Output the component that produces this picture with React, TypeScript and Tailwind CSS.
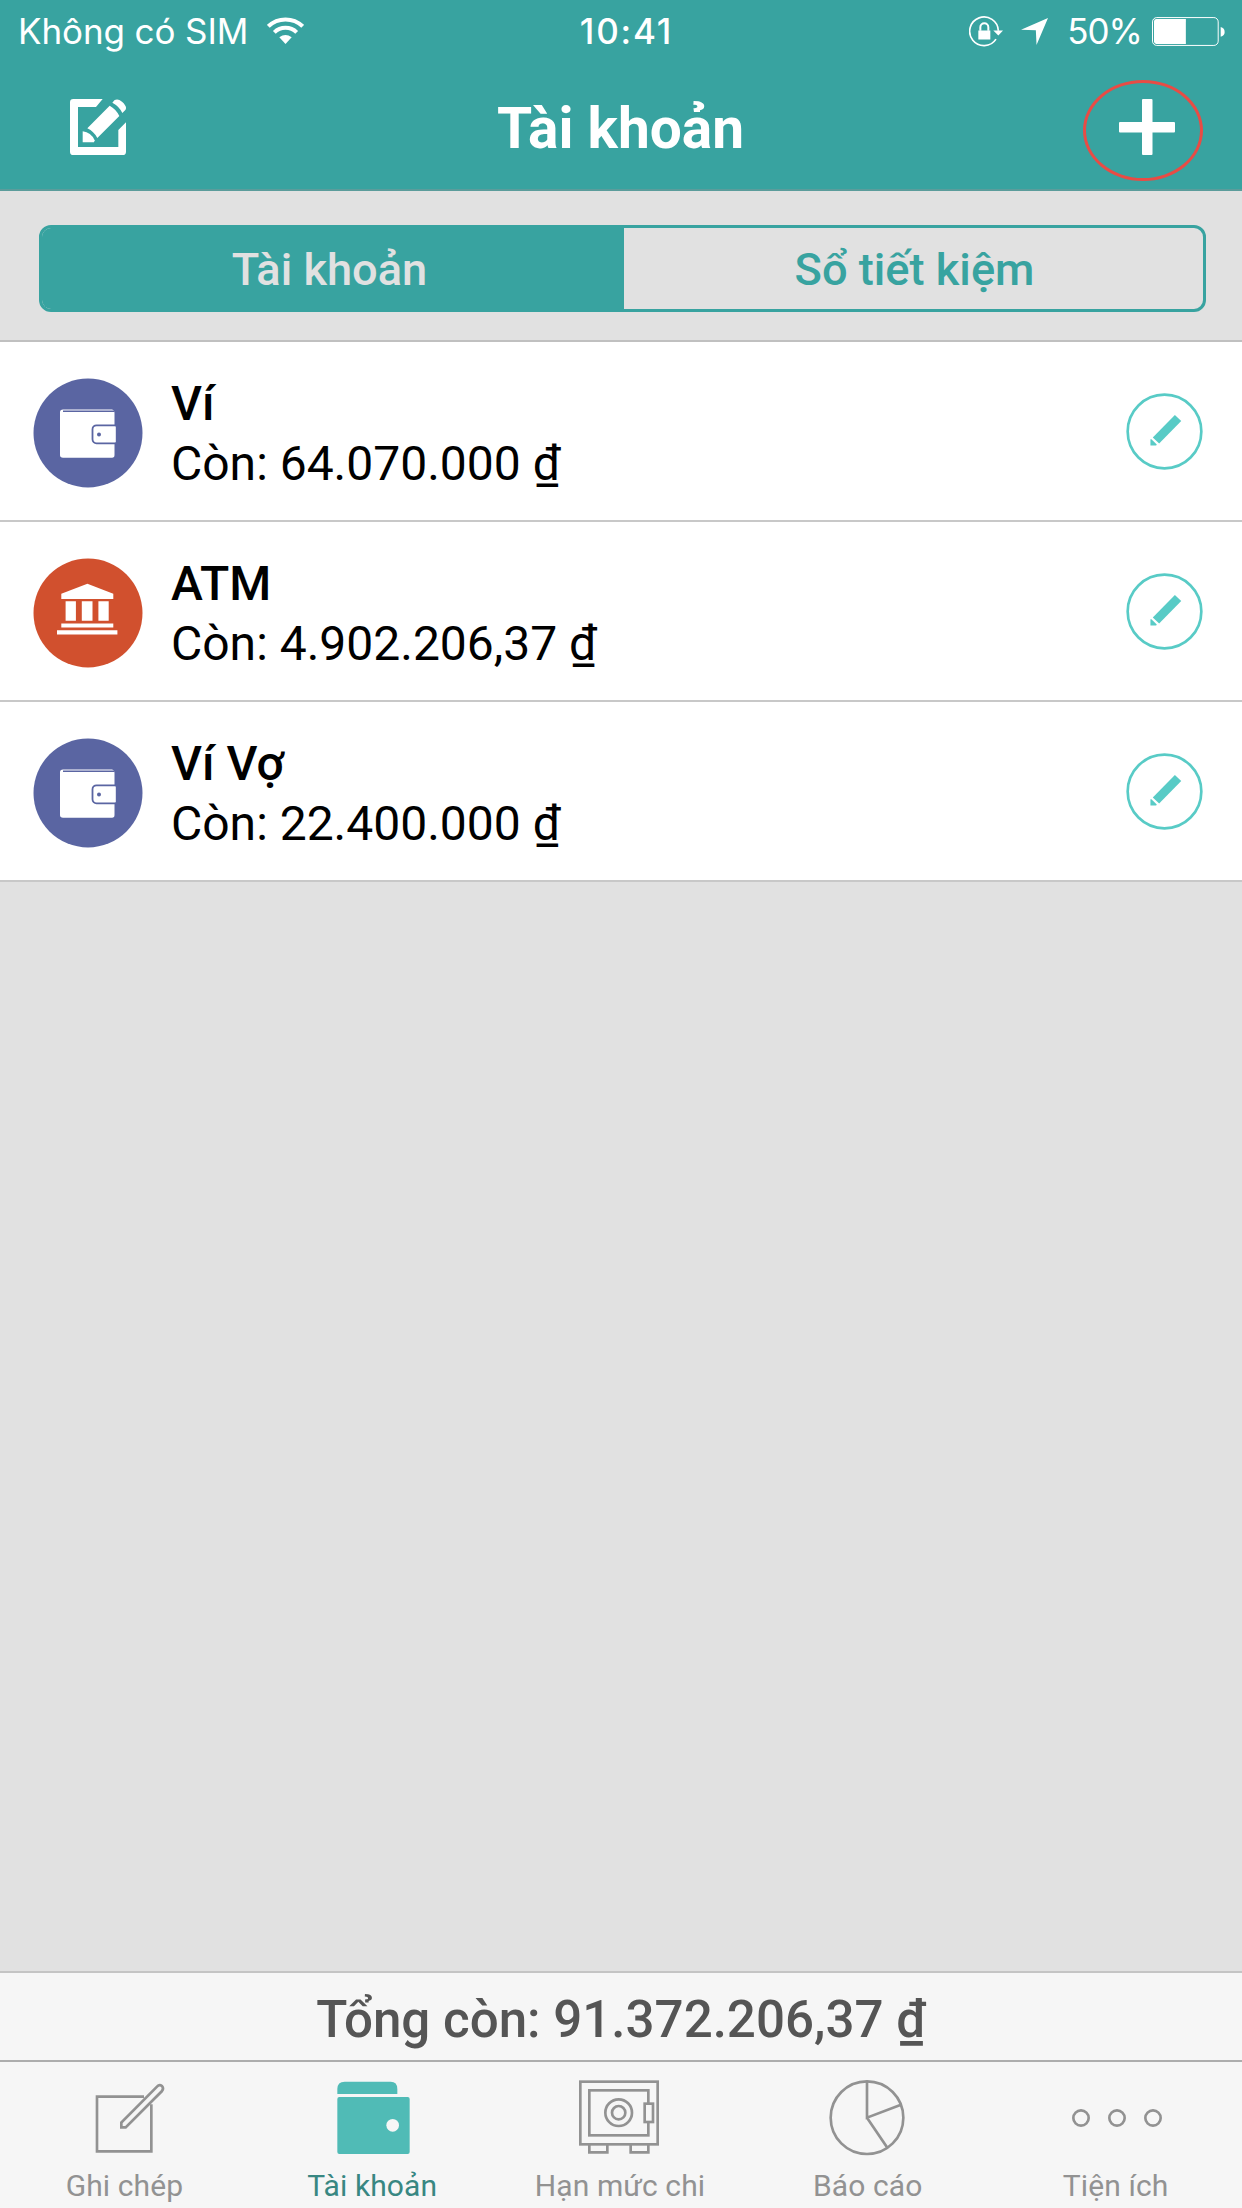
import React from "react";
import clsx from "clsx";

type Account = {
  name: string;
  balance: string;
  type: "wallet" | "bank";
};

const accounts: Account[] = [
  { name: "Ví", balance: "64.070.000", type: "wallet" },
  { name: "ATM", balance: "4.902.206,37", type: "bank" },
  { name: "Ví Vợ", balance: "22.400.000", type: "wallet" },
];

const tabs = [
  { label: "Ghi chép", icon: <NoteIcon /> },
  { label: "Tài khoản", icon: <WalletTabIcon />, active: true },
  { label: "Hạn mức chi", icon: <SafeIcon /> },
  { label: "Báo cáo", icon: <PieIcon /> },
  { label: "Tiện ích", icon: <MoreIcon /> },
];

function WifiIcon() {
  return (
    <svg viewBox="0 0 111 84" className="w-[37px] h-[28px]" fill="none" stroke="#fff" strokeWidth="12">
      <path d="M4 28 A74 74 0 0 1 107 28" />
      <path d="M22 46 A48 48 0 0 1 89 46" />
      <path d="M37 61 Q55.500 47 74 61 L55.500 81 Z" fill="#fff" stroke="none" />
    </svg>
  );
}

function RotationLockIcon() {
  return (
    <svg viewBox="0 0 102 92" className="w-[34px] h-[31px]" fill="none" stroke="#fff">
      <path d="M88 44 A43 43 0 1 0 81 69" strokeWidth="5" />
      <path d="M73 43 H102 L88 58 Z" fill="#fff" stroke="none" />
      <rect x="28" y="43" width="36" height="27" fill="#fff" stroke="none" />
      <path d="M34 44 V33 A12 12 0 0 1 58 33 V44" strokeWidth="6" />
    </svg>
  );
}

function LocationIcon() {
  return (
    <svg viewBox="0 0 80 80" className="w-[27px] h-[27px]" fill="#fff">
      <path d="M0 35 L80 0 L46 80 L44 36 Z" />
    </svg>
  );
}

function BatteryIcon() {
  return (
    <svg viewBox="0 0 220 87" className="w-[73px] h-[29px]" fill="#fff">
      <rect x="1.500" y="1.500" width="198" height="84" rx="13" fill="none" stroke="#fff" strokeWidth="3" />
      <path d="M13 6 H102 V81 H13 Q6 81 6 74 V13 Q6 6 13 6 Z" />
      <path d="M207 30 Q219 33 219 45 Q219 56 207 59 Z" />
    </svg>
  );
}

function ComposeIcon() {
  return (
    <svg viewBox="0 0 168 168" className="w-14 h-14" fill="#fff">
      <path d="M98 0 H10 Q0 0 0 10 V158 Q0 168 10 168 H158 Q168 168 168 158 V70 L145 93 V144 H24 V24 H78 Z" />
      <path d="M119 20 Q138 30 148 51 L82 117 Q72 98 52 88 Z" />
      <path d="M38 97 Q63 100 74 124 L72 130 H38 Z" />
      <path d="M127 11 L133 4 Q143 -3 156 8 Q173 23 166 33 L157 42 Q148 22 127 11 Z" />
    </svg>
  );
}

function WalletBadge() {
  return (
    <svg viewBox="0 0 110 110" className="w-[110px] h-[110px]">
      <circle cx="55" cy="55" r="54.500" fill="#5a65a2" />
      <path d="M30 31.500 H79 Q81.500 32 81.500 35 V77 Q81.500 79.700 79 79.700 H30 Q27 79.700 27 77 V34 Q27 31.500 30 31.500 Z" fill="#fff" />
      <path d="M30 33.300 H81.500" stroke="#5a65a2" strokeWidth="1.400" />
      <rect x="59.500" y="47.300" width="26" height="18" rx="4" fill="#fff" stroke="#5a65a2" strokeWidth="1.800" />
      <path d="M82.800 45 H88 V68 H82.800 Z" fill="#5a65a2" />
      <circle cx="66" cy="56.500" r="2" fill="#5a65a2" />
    </svg>
  );
}

function BankBadge() {
  return (
    <svg viewBox="0 0 110 110" className="w-[110px] h-[110px]">
      <circle cx="55" cy="55" r="54.500" fill="#d1502e" />
      <g fill="#fff">
        <path d="M54.400 25.700 L80.300 35.700 V41 H28.300 V35.700 Z" />
        <path d="M32.600 43.300 h10.300 v19.400 h-10.300 Z M48.800 43.300 h10.700 v19.400 h-10.700 Z M65.400 43.300 h10.300 v19.400 h-10.300 Z" />
        <path d="M28.300 65.500 h52 v4 h-52 Z M24 72.200 h60.400 v4.200 h-60.400 Z" />
      </g>
    </svg>
  );
}

function EditCircle() {
  return (
    <svg viewBox="0 0 230 230" className="w-[77px] h-[77px]" fill="#58cbc6">
      <circle cx="115" cy="115" r="110" fill="none" stroke="#58cbc6" strokeWidth="8" />
      <path d="M146 66 L165 84 L99 151 L80 133 Z" />
      <path d="M73 138 L76 138 L92 154 L90 157 H73 Z" />
    </svg>
  );
}

function NoteIcon() {
  return (
    <svg viewBox="0 0 252 234" className="w-[84px] h-[78px]" fill="none" stroke="#929292" strokeWidth="8">
      <path d="M186 53 H45 V217 H208 V76" />
      <path d="M118 145 V131 L225 23 Q232 15 240 21 Q246 28 240 36 L131 145 Z" />
    </svg>
  );
}

function WalletTabIcon() {
  return (
    <svg viewBox="0 0 252 234" className="w-[84px] h-[78px]" fill="#50bbb6">
      <path d="M22 45 V30 Q22 8 44 8 H182 Q202 8 202 30 V45 Z" />
      <rect x="22" y="54" width="217" height="171" rx="6" />
      <circle cx="188" cy="139" r="19" fill="#f6f6f6" />
    </svg>
  );
}

function SafeIcon() {
  return (
    <svg viewBox="0 0 252 234" className="w-[84px] h-[78px]" fill="none" stroke="#929292" strokeWidth="8">
      <rect x="10" y="8" width="232" height="188" />
      <rect x="37" y="34" width="177" height="135" />
      <circle cx="125" cy="101" r="40" />
      <circle cx="125" cy="101" r="20" />
      <rect x="203" y="74" width="25" height="55" fill="#f6f6f6" />
      <path d="M37 196 V220 H91 V196 M161 196 V220 H214 V196" />
    </svg>
  );
}

function PieIcon() {
  return (
    <svg viewBox="0 0 252 234" className="w-[84px] h-[78px]" fill="none" stroke="#929292" strokeWidth="8">
      <circle cx="126" cy="116" r="109" />
      <path d="M126 7 V116 L226 78 M126 116 L186 205" />
    </svg>
  );
}

function MoreIcon() {
  return (
    <svg viewBox="0 0 252 234" className="w-[84px] h-[78px] overflow-visible" fill="none" stroke="#929292" strokeWidth="8">
      <circle cx="24" cy="117" r="23" />
      <circle cx="132" cy="117" r="23" />
      <circle cx="240" cy="117" r="23" />
    </svg>
  );
}

function StatusBar() {
  return (
    <div className="grid grid-cols-3 items-center h-[62px] pl-[18px] pr-[17px] font-['Inter',sans-serif] text-[35px] leading-none">
      <div className="flex items-center gap-[19px] whitespace-nowrap">
        <span className="font-normal tracking-[-0.1px]">Không có SIM</span>
        <WifiIcon />
      </div>
      <p className="pl-[10px] text-center font-medium tracking-[1.8px]">10:41</p>
      <div className="flex items-center justify-end">
        <RotationLockIcon />
        <div className="ml-[18px]">
          <LocationIcon />
        </div>
        <span className="ml-[19px] mr-[10px] font-normal tracking-[-1px]">50%</span>
        <BatteryIcon />
      </div>
    </div>
  );
}

function AccountRow({ name, balance, type }: Account) {
  return (
    <li className="flex items-center h-[180px] pt-[2px] pl-[33px] pr-[39px] bg-white border-b-2 border-[#c8c8c8]">
      <div className="pt-[1px]">{type === "wallet" ? <WalletBadge /> : <BankBadge />}</div>
      <div className="ml-[28px] pt-[4px] flex-1 text-[48px] leading-[60px] text-black">
        <p className="font-medium">{name}</p>
        <p>Còn: {balance} ₫</p>
      </div>
      <button className="pb-[2px]">
        <EditCircle />
      </button>
    </li>
  );
}

export default function App() {
  return (
    <div className="flex flex-col w-[1242px] h-[2208px] overflow-hidden bg-[#e1e1e1] font-['Roboto',sans-serif]">
      <header className="h-[191px] bg-[#38a3a0] text-white border-b-2 border-[#5b9c9b]">
        <StatusBar />
        <div className="flex items-center justify-between h-[130px] pl-[70px] pr-[67px]">
          <button>
            <ComposeIcon />
          </button>
          <h1 className="pt-[4px] pr-[4px] text-[56.8px] leading-none font-bold">Tài khoản</h1>
          <button className="relative">
            <svg viewBox="0 0 56 56" className="w-14 h-14" fill="#fff">
              <rect x="0" y="23" width="56" height="10.500" rx="1" />
              <rect x="23" y="0" width="10.500" height="56" rx="1" />
            </svg>
            {/* highlight ring around the add button */}
            <span className="absolute left-[-36px] top-[-19px] w-[120px] h-[101px] rounded-[50%] border-3 border-[#e84c45]" />
          </button>
        </div>
      </header>

      <div className="h-[151px] pt-[34px] pl-[39px] pr-[36px] border-b-2 border-[#c0c0c0]">
        <div className="flex h-[87px] rounded-[12px] border-3 border-[#38a3a0] overflow-hidden text-[45.2px] leading-none font-medium">
          <button className="w-[582px] pt-[3px] pr-[7px] bg-[#38a3a0] text-[#e1e1e1]">Tài khoản</button>
          <button className="flex-1 pt-[3px] pl-[2px] text-[#38a3a0]">Sổ tiết kiệm</button>
        </div>
      </div>

      <ul>
        {accounts.map((account) => (
          <AccountRow key={account.name} {...account} />
        ))}
      </ul>

      <div className="mt-auto flex items-center justify-center h-[89px] pt-[6px] bg-[#f6f6f6] border-t-2 border-[#c4c4c4] text-[51.1px] leading-none font-medium text-[#555]">
        Tổng còn: 91.372.206,37 ₫
      </div>
      <nav className="flex h-[148px] pr-[3px] bg-[#f6f6f6] border-t-2 border-[#adadad]">
        {tabs.map((tab) => (
          <button key={tab.label} className="flex-1 flex flex-col items-center pt-[17px]">
            {tab.icon}
            <span
              className={clsx(
                "mt-[11px] pl-[1px] text-[30px] leading-[36px] tracking-[0.1px]",
                tab.active ? "text-[#388782]" : "text-[#929292]"
              )}
            >
              {tab.label}
            </span>
          </button>
        ))}
      </nav>
    </div>
  );
}
